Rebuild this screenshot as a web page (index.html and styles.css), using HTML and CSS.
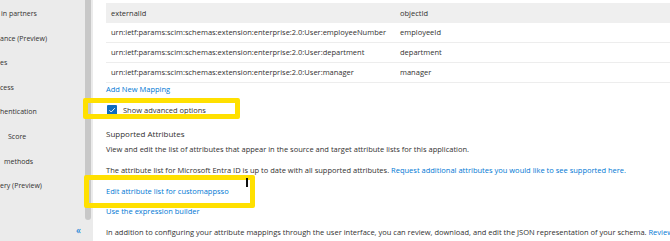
FILE: index.html
```html
<!DOCTYPE html>
<html>
<head>
<meta charset="utf-8">
<link rel="stylesheet" href="styles.css">
</head>
<body>
<aside class="sidebar">
  <div class="side-top">
    <ul class="nav">
      <li class="pad-1">in partners</li>
      <li>ance (Preview)</li>
      <li>es</li>
      <li>cess</li>
      <li>hentication</li>
      <li class="pad-8">Score</li>
      <li class="pad-4">methods</li>
      <li>ery (Preview)</li>
    </ul>
    <div class="scroll-track"><div class="scroll-thumb"></div></div>
  </div>
  <div class="side-bottom"><span class="collapse">«</span></div>
</aside>
<main class="main">
  <div class="table">
    <div class="row head"><div class="c1">externalId</div><div class="c2">objectId</div></div>
    <div class="row"><div class="c1">urn:ietf:params:scim:schemas:extension:enterprise:2.0:User:employeeNumber</div><div class="c2">employeeId</div></div>
    <div class="row"><div class="c1">urn:ietf:params:scim:schemas:extension:enterprise:2.0:User:department</div><div class="c2">department</div></div>
    <div class="row"><div class="c1">urn:ietf:params:scim:schemas:extension:enterprise:2.0:User:manager</div><div class="c2">manager</div></div>
  </div>
  <a class="link add">Add New Mapping</a>
  <label class="check-row">
    <span class="checkbox"><svg width="10" height="10" viewBox="0 0 10 10"><path d="M2.4 5.2 L4.2 7 L7.8 3.2" fill="none" stroke="#fff" stroke-width="0.9"/></svg></span>
    <span>Show advanced options</span>
  </label>
  <p class="title">Supported Attributes</p>
  <p class="p1">View and edit the list of attributes that appear in the source and target attribute lists for this application.</p>
  <p class="p2">The attribute list for Microsoft Entra ID is up to date with all supported attributes. <a class="link">Request additional attributes you would like to see supported here.</a></p>
  <p class="p2"><a class="link">Edit attribute list for customappsso</a></p>
  <p class="p3"><a class="link">Use the expression builder</a></p>
  <p class="p2">In addition to configuring your attribute mappings through the user interface, you can review, download, and edit the JSON representation of your schema. <a class="link">Review your schema here.</a></p>
</main>
<div class="highlight h1"></div>
<div class="highlight h2"></div>
<div class="ibeam"></div>
</body>
</html>
```
FILE: styles.css
```css
* { box-sizing: border-box; }
html, body { margin: 0; padding: 0; }
body {
  width: 670px;
  height: 241px;
  overflow: hidden;
  position: relative;
  display: flex;
  background: #fff;
  font-family: "Open Sans", "Noto Sans", sans-serif;
  font-size: 7.5px;
  color: #323130;
}
.sidebar {
  width: 93px;
  flex: none;
  background: #ebebeb;
  display: flex;
  flex-direction: column;
}
.side-top {
  height: 220px;
  display: flex;
}
.nav {
  list-style: none;
  margin: 0;
  padding: 2px 0 0 0;
  flex: 1;
  overflow: hidden;
  white-space: nowrap;
  font-size: 7px;
}
.nav li {
  height: 24.6px;
  line-height: 24.6px;
}
.pad-1 { padding-left: 1px; }
.pad-4 { padding-left: 4px; }
.pad-8 { padding-left: 8px; }
.scroll-track {
  width: 6px;
  margin-right: 2px;
  flex: none;
}
.scroll-thumb {
  height: 100%;
  background: #c8c8c8;
  border-radius: 0 0 3px 3px;
}
.side-bottom {
  flex: 1;
  display: flex;
  justify-content: flex-end;
  padding-right: 12px;
  padding-top: 3px;
}
.collapse {
  color: #0078d4;
  font-size: 10px;
  line-height: 14px;
}
.main {
  flex: 1;
  min-width: 0;
  padding: 3px 0 0 13px;
  white-space: nowrap;
  overflow: hidden;
}
.table { width: 600px; }
.row {
  display: flex;
  height: 20px;
  line-height: 19px;
  border-bottom: 1px solid #ededed;
}
.row.head {
  background: #efefef;
  border-bottom: none;
  line-height: 20px;
}
.c1 { width: 289px; padding-left: 5px; }
.c2 { padding-left: 5px; }
.link { color: #0078d4; text-decoration: none; }
.add {
  display: block;
  line-height: 12px;
}
.check-row {
  display: flex;
  align-items: center;
  height: 18px;
  margin-top: 6px;
  gap: 6px;
  padding-left: 1px;
}
.checkbox {
  width: 10px;
  height: 10px;
  background: #0f6cbd;
  border-radius: 1px;
  display: flex;
}
p { margin: 0; line-height: 14px; }
.title { margin-top: 8px; font-size: 8px; }
.p1 { margin-top: 1px; }
.p2 { margin-top: 7px; }
.p3 { margin-top: 6px; }
.highlight {
  position: absolute;
  border: 5px solid #ffe000;
  border-radius: 2px;
}
.h1 { left: 83px; top: 98px; width: 157px; height: 21px; }
.h2 { left: 84px; top: 175px; width: 171px; height: 33px; }
.ibeam {
  position: absolute;
  left: 246px;
  top: 178px;
  width: 2px;
  height: 9px;
  background: #111;
}
```
